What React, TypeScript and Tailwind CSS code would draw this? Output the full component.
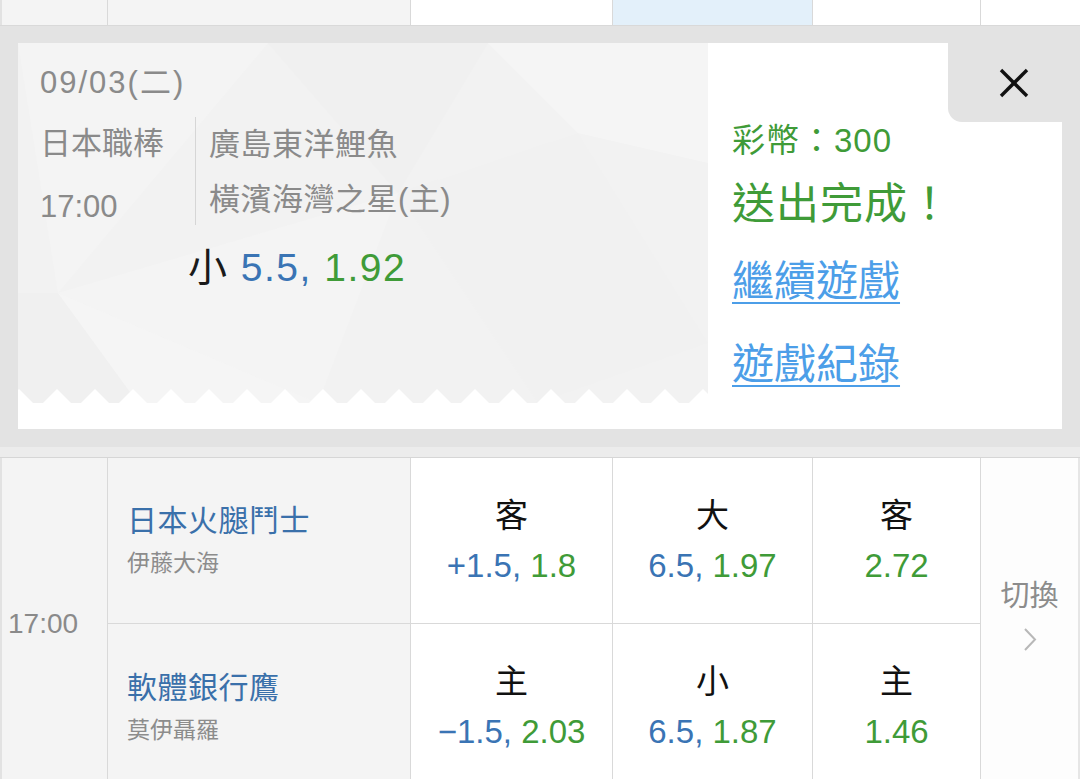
import React from "react";

const BLUE = "text-[#3a74b4]";
const GREEN = "text-[#3f9b38]";

function XIcon() {
  return (
    <svg width="30" height="30" viewBox="0 0 30 30">
      <line x1="2" y1="2" x2="28" y2="28" stroke="#111" strokeWidth="3.4" />
      <line x1="28" y1="2" x2="2" y2="28" stroke="#111" strokeWidth="3.4" />
    </svg>
  );
}

function Chevron() {
  return (
    <svg width="14" height="25" viewBox="0 0 14 25">
      <polyline points="2,2 12,12.5 2,23" fill="none" stroke="#b8b8b8" strokeWidth="2" />
    </svg>
  );
}

function TicketBg() {
  return (
    <svg className="absolute inset-0" width="690" height="360" viewBox="0 0 690 360">
      <defs>
        <pattern id="zz" x="25" y="346" width="38" height="14" patternUnits="userSpaceOnUse">
          <polygon points="0,14 14,0 28,14" fill="#ffffff" />
        </pattern>
      </defs>
      <rect width="690" height="360" fill="#f2f2f2" />
      <polygon points="0,0 250,0 40,250" fill="#f4f4f4" />
      <polygon points="250,0 470,0 380,150" fill="#f0f0f0" />
      <polygon points="40,250 380,150 300,360" fill="#f4f4f4" />
      <polygon points="470,0 690,0 690,120 560,90" fill="#f5f5f5" />
      <polygon points="380,150 560,90 690,300 520,360" fill="#f1f1f1" />
      <polygon points="0,250 40,250 120,360 0,360" fill="#f0f0f0" />
      <polygon points="120,360 40,250 300,360" fill="#f5f5f5" />
      <rect x="0" y="346" width="690" height="14" fill="url(#zz)" />
    </svg>
  );
}

function TeamCell({ name, pitcher, border }: { name: string; pitcher: string; border?: boolean }) {
  return (
    <div
      className={`w-[303px] h-[166px] bg-[#f4f4f4] border-r border-[#d9d9d9] flex flex-col justify-center pl-[19px] ${
        border ? "border-b" : ""
      }`}
    >
      <div className="text-[30px] leading-[36px] text-[#3a70aa] tracking-[0.5px]">{name}</div>
      <div className="text-[23px] leading-[30px] text-[#8c8c8c] mt-[9px]">{pitcher}</div>
    </div>
  );
}

function OddsCell({
  w,
  label,
  line,
  odds,
  border,
}: {
  w: string;
  label: string;
  line?: string;
  odds: string;
  border?: boolean;
}) {
  return (
    <div
      className={`${w} h-[166px] bg-white border-r border-[#d9d9d9] flex flex-col items-center justify-center ${
        border ? "border-b" : ""
      }`}
    >
      <div className="text-[33px] leading-[40px] text-[#111]">{label}</div>
      <div className="text-[33px] leading-[40px] mt-[10px] whitespace-nowrap">
        {line && <span className={BLUE}>{line}, </span>}
        <span className={GREEN}>{odds}</span>
      </div>
    </div>
  );
}

export default function App() {
  return (
    <div className="w-[1080px] h-[779px] overflow-hidden bg-white font-['Liberation_Sans','Noto_Sans_CJK_TC',sans-serif]">
      {/* top strip (previous row tail) */}
      <div className="flex h-[26px] border-b border-[#d9d9d9]">
        <div className="w-[108px] bg-[#f4f4f4] border-l-2 border-l-[#e2e2e2] border-r border-r-[#d9d9d9]" />
        <div className="w-[303px] bg-[#f4f4f4] border-r border-[#d9d9d9]" />
        <div className="w-[202px] bg-white border-r border-[#d9d9d9]" />
        <div className="w-[200px] bg-[#e3f0fa] border-r border-[#d9d9d9]" />
        <div className="w-[168px] bg-white border-r border-[#d9d9d9]" />
        <div className="flex-1 bg-white" />
      </div>

      {/* confirmation panel */}
      <div className="bg-[#e3e3e3] pt-[17px] pb-[18px] pl-[18px] pr-[18px]">
        <div className="relative flex h-[386px] bg-white">
          {/* left ticket part */}
          <div className="w-[690px] h-[360px] relative">
            <TicketBg />
            <div className="relative pl-[22px] pt-[22px] text-[#8a8a8a]">
              <div className="text-[31px] leading-[36px] tracking-[2px]">09/03(二)</div>
              <div className="flex h-[108px] mt-[16px]">
                <div className="w-[155px] flex flex-col pt-[9px]">
                  <div className="text-[31px] leading-[36px]">日本職棒</div>
                  <div className="text-[31px] leading-[36px] mt-[27px]">17:00</div>
                </div>
                <div className="border-l border-[#d6d6d6] pl-[13px] pt-[10px] flex flex-col">
                  <div className="text-[31px] leading-[36px] tracking-[0.5px]">廣島東洋鯉魚</div>
                  <div className="text-[31px] leading-[36px] mt-[19px] tracking-[0.5px]">橫濱海灣之星(主)</div>
                </div>
              </div>
              <div className="ml-[148px] mt-[21px] text-[39px] leading-[44px] whitespace-nowrap tracking-[1.5px]">
                <span className="text-[#1a1a1a]">小 </span>
                <span className={BLUE}>5.5, </span>
                <span className={GREEN}>1.92</span>
              </div>
            </div>
          </div>

          {/* right result part */}
          <div className="flex-1 pl-[24px] flex flex-col">
            <div className={`mt-[80px] text-[33px] leading-[36px] tracking-[1px] ${GREEN}`}>彩幣：300</div>
            <div className={`mt-[20px] text-[43px] leading-[50px] tracking-[1px] ${GREEN}`}>送出完成！</div>
            <div className="mt-[28px] text-[42px] leading-[50px] text-[#4c9ee8] underline decoration-2 underline-offset-[6px]">
              繼續遊戲
            </div>
            <div className="mt-[33px] text-[42px] leading-[50px] text-[#4c9ee8] underline decoration-2 underline-offset-[6px]">
              遊戲紀錄
            </div>
          </div>

          {/* close tab */}
          <div className="absolute top-0 right-[-18px] w-[132px] h-[79px] bg-[#e3e3e3] rounded-bl-[14px] flex items-center justify-center">
            <XIcon />
          </div>
        </div>
      </div>
      <div className="h-[11px] bg-[#ececec] border-b border-[#d6d6d6]" />

      {/* game table */}
      <div className="flex h-[332px]">
        <div className="w-[108px] bg-[#f4f4f4] border-l-2 border-l-[#e2e2e2] border-r border-r-[#d9d9d9] flex items-center pl-[6px]">
          <span className="text-[28px] leading-[34px] text-[#8a8a8a]">17:00</span>
        </div>
        <div className="flex flex-col">
          <div className="flex">
            <TeamCell name="日本火腿鬥士" pitcher="伊藤大海" border />
            <OddsCell w="w-[202px]" label="客" line="+1.5" odds="1.8" border />
            <OddsCell w="w-[200px]" label="大" line="6.5" odds="1.97" border />
            <OddsCell w="w-[168px]" label="客" odds="2.72" border />
          </div>
          <div className="flex">
            <TeamCell name="軟體銀行鷹" pitcher="莫伊聶羅" />
            <OddsCell w="w-[202px]" label="主" line="−1.5" odds="2.03" />
            <OddsCell w="w-[200px]" label="小" line="6.5" odds="1.87" />
            <OddsCell w="w-[168px]" label="主" odds="1.46" />
          </div>
        </div>
        <div className="flex-1 bg-[#fdfdfd] border-r-2 border-[#e6e6e6] flex flex-col items-center justify-center pb-[18px]">
          <div className="text-[29px] leading-[34px] text-[#8c8c8c]">切換</div>
          <div className="mt-[14px]">
            <Chevron />
          </div>
        </div>
      </div>
    </div>
  );
}
